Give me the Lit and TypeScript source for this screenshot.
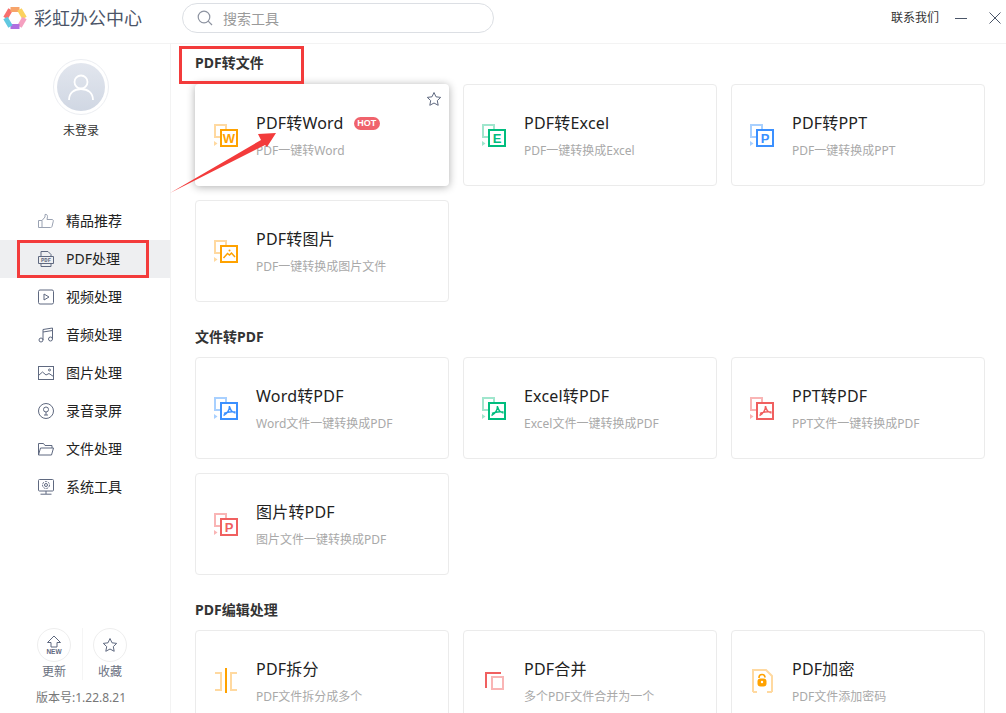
import { LitElement, html, css, svg } from "lit";
import { customElement } from "lit/decorators.js";

const C = { o: ["#ffa200", "#ffd9a0"], g: ["#00bd7e", "#a0e6cd"], b: ["#3b90ff", "#a8d0ff"], r: ["#f06060", "#f9b5b5"] };
type Col = keyof typeof C;
const pdfMark = (c: string) => svg`<path d="M15.500 9c.2 4-2.500 8-6 9.500M15.500 9c.5 4 3 6.500 6 7M10 16.500c3-1.500 7.500-2 11.500-1.500" fill="none" stroke=${c} stroke-width="1.500"/>`;

function fileIcon(col: Col, inner: unknown) {
  const [d, l] = C[col];
  return html`<svg class="ficon" viewBox="0 0 26 26" width="26" height="26">
    <path d="M6 13H1V1h11v4" fill="none" stroke=${l} stroke-width="2"/>
    <path d="M0 17l3.500 2.500L0 22z" fill=${l}/>
    <rect x="7" y="6" width="16" height="16" fill="#fff" stroke=${d} stroke-width="2"/>
    ${inner}
  </svg>`;
}
const letter = (col: Col, t: string) => fileIcon(col, svg`<text class="ltr" x="15" y="18.500" text-anchor="middle" fill=${C[col][0]}>${t}</text>`);
const pdf = (col: Col) => fileIcon(col, pdfMark(C[col][0]));
const picture = (col: Col) => fileIcon(col, svg`<path d="M9.500 18l4-4.500 2 1.500 2-2 3.500 4" fill="none" stroke=${C[col][0]} stroke-width="1.500"/><circle cx="15.500" cy="10.500" r="1" fill=${C[col][0]}/>`);
const split = html`<svg class="ficon" viewBox="0 0 26 26" width="26" height="26">
  <path d="M1 3h6v17H1M23 3h-6v17h6" fill="none" stroke="#ffd9a0" stroke-width="2"/>
  <path d="M12 -2v25" stroke="#ffa200" stroke-width="2"/></svg>`;
const merge = html`<svg class="ficon" viewBox="0 0 26 26" width="26" height="26">
  <path d="M4 18V3h15" fill="none" stroke="#f06060" stroke-width="2"/>
  <rect x="10" y="7" width="11" height="12" fill="none" stroke="#f9b5b5" stroke-width="2"/></svg>`;
const lock = html`<svg class="ficon" viewBox="0 0 26 26" width="26" height="26">
  <path d="M3 22V0h13l6 6v16" fill="none" stroke="#ffd9a0" stroke-width="2"/>
  <path d="M3 22h4M17 22h5" fill="none" stroke="#ffd9a0" stroke-width="2"/>
  <path d="M9 8V7.500a3 3 0 0 1 6 0" fill="none" stroke="#ffa200" stroke-width="1.600"/>
  <rect x="7.500" y="8.500" width="9" height="8" rx="3" fill="#ffa200"/><circle cx="12" cy="12" r="1.200" fill="#fff"/></svg>`;

const sections = [
  { title: "PDF转文件", cards: [
    { t: "PDF转Word", s: "PDF一键转Word", i: letter("o", "W"), hot: true },
    { t: "PDF转Excel", s: "PDF一键转换成Excel", i: letter("g", "E") },
    { t: "PDF转PPT", s: "PDF一键转换成PPT", i: letter("b", "P") },
    { t: "PDF转图片", s: "PDF一键转换成图片文件", i: picture("o") },
  ]},
  { title: "文件转PDF", cards: [
    { t: "Word转PDF", s: "Word文件一键转换成PDF", i: pdf("b") },
    { t: "Excel转PDF", s: "Excel文件一键转换成PDF", i: pdf("g") },
    { t: "PPT转PDF", s: "PPT文件一键转换成PDF", i: pdf("r") },
    { t: "图片转PDF", s: "图片文件一键转换成PDF", i: letter("r", "P") },
  ]},
  { title: "PDF编辑处理", cards: [
    { t: "PDF拆分", s: "PDF文件拆分成多个", i: split },
    { t: "PDF合并", s: "多个PDF文件合并为一个", i: merge },
    { t: "PDF加密", s: "PDF文件添加密码", i: lock },
  ]},
];

const ns = (body: unknown) => html`<svg class="nicon" viewBox="0 0 16 16" width="16" height="16" fill="none" stroke="#5f6980" stroke-width="1">${body}</svg>`;
const nav = [
  { t: "精品推荐", i: ns(svg`<path d="M.5 7.500h3.500v7H.5zM4 7.500l3-3.500V1.500c1.500-.5 2.500.5 2.500 2L9 6.500h5c1 0 1.500.8 1.300 1.700l-1.300 5.300c-.2.700-.7 1-1.500 1H4" stroke="#9aa2b2"/>`) },
  { t: "PDF处理", active: true, i: ns(svg`<path d="M3 5V.5h7l3 3V5M3 13v2.500h10V13M.5 5.500h15v7H.5z"/><text class="pdft" x="8" y="11" text-anchor="middle" fill="#5f6980" stroke="none">PDF</text>`) },
  { t: "视频处理", i: ns(svg`<rect x=".5" y="1" width="15" height="14" rx="1.500"/><path d="M6 5v6l5-3z"/>`) },
  { t: "音频处理", i: ns(svg`<circle cx="3" cy="13" r="2"/><circle cx="12.500" cy="12" r="2"/><path d="M5 13V2.500L14.500 1v11M5 5l9.500-1.500"/>`) },
  { t: "图片处理", i: ns(svg`<rect x=".5" y="1.500" width="15" height="13"/><path d="M.5 10.500l4-3.500 3.500 3 3-1.500 4.500 3"/><circle cx="11.500" cy="5" r="1"/>`) },
  { t: "录音录屏", i: ns(svg`<circle cx="8" cy="8" r="7.500"/><circle cx="8" cy="6.500" r="2.500"/><path d="M8 9v3M6 12h4"/>`) },
  { t: "文件处理", i: ns(svg`<path d="M.5 14V2.500h5l1.500 2h7V7M.5 14l2-7h13l-2 7z"/>`) },
  { t: "系统工具", i: ns(svg`<rect x=".5" y=".5" width="15" height="11.500" rx="1"/><path d="M8 12v3M2.500 15.200h11"/><circle cx="8" cy="6" r="3.500" stroke-dasharray="2 1"/><circle cx="8" cy="6" r="1.500"/>`) },
];

@customElement("app-root")
export class AppRoot extends LitElement {
  static styles = css`
    :host { display: block; width: 1006px; height: 713px; overflow: hidden; position: relative; background: #fff;
      font-family: "Noto Sans", "Noto Sans CJK SC", sans-serif; color: #222; }
    * { box-sizing: border-box; }
    svg { overflow: visible; }
    .header { height: 44px; border-bottom: 1px solid #f3f3f3; display: flex; align-items: center; padding: 0 5px 7px 3px; }
    .logo { display: block; flex: none; }
    .brand { font-size: 18px; line-height: 24px; color: #4b5568; margin: 0 41px 0 7px; white-space: nowrap; width: 107px; }
    .search { width: 312px; height: 30px; border: 1px solid #dcdfe4; border-radius: 15px; display: flex; align-items: center; gap: 10px; padding-left: 14px;
      font-size: 14px; color: #9a9a9a; }
    .contact { margin-left: auto; font-size: 12px; color: #333; line-height: 16px; }
    .wctl { display: block; flex: none; }
    .min { margin-left: 16px; }
    .close { margin-left: 22px; }
    .body { display: flex; height: 669px; }
    .side { width: 171px; flex: none; border-right: 1px solid #f3f3f3; display: flex; flex-direction: column; align-items: stretch; }
    .user { display: flex; flex-direction: column; align-items: center; padding: 15px 8px 0 0; height: 158px; }
    .avatar { width: 56px; height: 56px; border-radius: 50%; border: 1px solid #eceef2; display: flex; align-items: center; justify-content: center; }
    .avatar div { width: 48px; height: 48px; border-radius: 50%; background: linear-gradient(180deg, #e2e6ee, #d0d7e3); display: flex; align-items: center; justify-content: center; }
    .uname { font-size: 12px; line-height: 16px; margin-top: 8px; color: #333; }
    .nitem { height: 38px; display: flex; align-items: center; padding: 0 0 0 38px; gap: 12px; font-size: 14px; color: #222; }
    .nitem span { line-height: 20px; margin-top: -1px; }
    .nitem.on { background: #eeeff1; }
    .nicon { display: block; flex: none; }
    .pdft { font: 700 5.500px "Liberation Mono", monospace; }
    .foot { margin-top: auto; padding-bottom: 7px; display: flex; flex-direction: column; align-items: center; }
    .tools { display: flex; width: 90px; justify-content: space-between; position: relative; margin-left: -6px; }
    .tools::after { content: ""; position: absolute; left: 50%; top: 0; bottom: 0; width: 1px; background: #f5f5f5; }
    .tool { display: flex; flex-direction: column; align-items: center; font-size: 12px; line-height: 16px; color: #6a7080; width: 34px; white-space: nowrap; }
    .circ { width: 34px; height: 34px; border-radius: 50%; border: 1px solid #eeeeee; display: flex; align-items: center; justify-content: center; margin-bottom: 2px; }
    .ver { font-size: 12px; line-height: 16px; color: #777; margin-top: 10px; margin-left: -8px; }
    .main { flex: 1; padding: 9px 0 0 24px; overflow: hidden; }
    .sec { margin-bottom: 25px; }
    .sec h2 { margin: 0 0 11px; font-size: 14px; line-height: 20px; font-weight: 700; color: #333; }
    .sec + .sec h2 { margin-bottom: 10px; }
    .grid { display: grid; grid-template-columns: repeat(3, 254px); gap: 14px; }
    .card { height: 102px; border: 1px solid #ebebeb; border-radius: 4px; display: flex; position: relative; padding: 26px 0 0 18px; background: #fff; }
    .card.lift { border-color: transparent; box-shadow: 0 1px 8px rgba(0,0,0,.32); }
    .ficon { display: block; flex: none; margin-top: 13px; }
    .txt { margin-left: 16px; }
    .ct { font-size: 16px; line-height: 24px; color: #222; display: flex; align-items: center; white-space: nowrap; letter-spacing: .2px; }
    .cs { font-size: 12px; line-height: 16px; color: #a9a9a9; margin-top: 8px; white-space: nowrap; }
    .ltr { font: 700 13px "Liberation Sans", sans-serif; }
    .hot { margin-left: 10px; width: 26px; height: 13px; border-radius: 7px; background: #f0636c; color: #fff; font: 700 9px/13px "Liberation Sans", sans-serif; text-align: center; letter-spacing: 0; }
    .star { position: absolute; right: 6px; top: 6px; display: block; }
    .anno { position: absolute; border: 3px solid #f33b3b; pointer-events: none; }
    .a1 { left: 179px; top: 46px; width: 125px; height: 38px; }
    .a2 { left: 17px; top: 240px; width: 132px; height: 38px; }
    .arrow { position: absolute; left: 0; top: 0; pointer-events: none; display: block; }
  `;

  render() {
    return html`
      <div class="header">
        <svg class="logo" viewBox="0 0 24 24" width="24" height="24" fill="none" stroke-width="5">
          <path d="M2.500 12L7.500 3.500" stroke="#f8706e"/><path d="M7.500 3.500h9" stroke="#f7a46a"/><path d="M16.500 3.500L21.500 12" stroke="#fbd25e"/>
          <path d="M21.500 12l-5 8.500" stroke="#f5a0c0"/><path d="M16.500 20.500h-9" stroke="#b070e0"/><path d="M7.500 20.500L2.500 12" stroke="#60c8e0"/>
        </svg>
        <div class="brand">彩虹办公中心</div>
        <div class="search">
          <svg viewBox="0 0 16 16" width="16" height="16" fill="none" stroke="#8d93a0" stroke-width="1.200"><circle cx="7" cy="7" r="5.800"/><path d="M11.200 11.200l3.800 3.800"/></svg>
          <span>搜索工具</span>
        </div>
        <div class="contact">联系我们</div>
        <svg class="wctl min" viewBox="0 0 12 12" width="12" height="12" stroke="#4a5568"><path d="M0 6.500h12"/></svg>
        <svg class="wctl close" viewBox="0 0 12 12" width="12" height="12" stroke="#4a5568"><path d="M.5.500l11 11M11.500.500l-11 11"/></svg>
      </div>
      <div class="body">
        <aside class="side">
          <div class="user">
            <div class="avatar"><div>
              <svg viewBox="0 0 28 28" width="28" height="28" fill="none" stroke="#fff" stroke-width="1.800"><circle cx="14" cy="9" r="6.500"/><path d="M2 27c0-7 5-11 12-11s12 4 12 11"/></svg>
            </div></div>
            <div class="uname">未登录</div>
          </div>
          ${nav.map((n) => html`<div class="nitem ${n.active ? "on" : ""}">${n.i}<span>${n.t}</span></div>`)}
          <div class="foot">
            <div class="tools">
              <div class="tool"><div class="circ">
                <svg viewBox="0 0 18 20" width="18" height="20" fill="none" stroke="#5f6980"><path d="M9 1L2.500 7.500H6V12h6V7.500h3.500z"/><text x="9" y="19" text-anchor="middle" font-family="Liberation Sans" font-weight="700" font-size="6.500" fill="#5f6980" stroke="none">NEW</text></svg>
              </div>更新</div>
              <div class="tool"><div class="circ">
                <svg viewBox="0 0 16 16" width="16" height="16" fill="none" stroke="#5f6980"><path d="M8 1.500l2 4.300 4.700.6-3.400 3.200.9 4.700L8 12l-4.200 2.300.9-4.700L1.300 6.400 6 5.800z"/></svg>
              </div>收藏</div>
            </div>
            <div class="ver">版本号:1.22.8.21</div>
          </div>
        </aside>
        <main class="main">
          ${sections.map((s) => html`<section class="sec">
            <h2>${s.title}</h2>
            <div class="grid">
              ${s.cards.map((c: any) => html`<div class="card ${c.hot ? "lift" : ""}">
                ${c.i}
                <div class="txt">
                  <div class="ct">${c.t}${c.hot ? html`<span class="hot">HOT</span>` : ""}</div>
                  <div class="cs">${c.s}</div>
                </div>
                ${c.hot ? html`<svg class="star" viewBox="0 0 16 16" width="16" height="16" fill="none" stroke="#5f6980"><path d="M8 1.500l2 4.300 4.700.6-3.400 3.200.9 4.700L8 12l-4.200 2.300.9-4.700L1.300 6.400 6 5.800z"/></svg>` : ""}
              </div>`)}
            </div>
          </section>`)}
        </main>
      </div>
      <div class="anno a1"></div>
      <div class="anno a2"></div>
      <svg class="arrow" width="300" height="200" viewBox="0 0 300 200"><path d="M170 193L261 140L258 134L276 133L267 147L265 145Z" fill="#f33b3b"/></svg>
    `;
  }
}
